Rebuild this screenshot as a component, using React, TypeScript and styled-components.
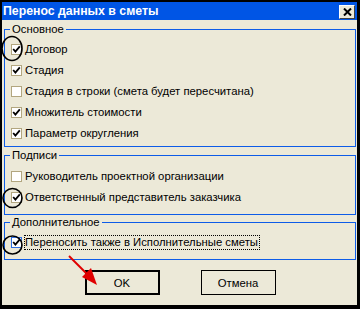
import React from 'react';
import styled, { createGlobalStyle } from 'styled-components';

const GlobalStyle = createGlobalStyle`
  html, body {
    margin: 0;
    padding: 0;
    background: #fff;
  }
`;

const Window = styled.div`
  position: relative;
  box-sizing: border-box;
  width: 360px;
  height: 309px;
  border-style: solid;
  border-color: #000;
  border-width: 2px 3px 4px 2px;
  background: #ece9d8;
  display: flex;
  flex-direction: column;
  font-family: 'Liberation Sans', Arial, sans-serif;
  font-size: 11.3px;
  color: #000;
`;

const TitleBar = styled.div`
  height: 18px;
  flex: none;
  background: #0055e5;
  display: flex;
  align-items: flex-start;
  justify-content: space-between;
  padding: 0 2px 0 1px;
`;

const Title = styled.div`
  color: #fff;
  font-weight: bold;
  font-size: 12.3px;
  line-height: 18px;
`;

const CloseButton = styled.div`
  box-sizing: border-box;
  width: 16px;
  height: 14px;
  margin-top: 3px;
  background: #ece9d8;
  border: 1px solid;
  border-color: #fff #404040 #404040 #fff;
  display: flex;
  align-items: center;
  justify-content: center;
`;

const Body = styled.div`
  padding: 9px 1px 0 2px;
`;

const Group = styled.div<{ $top: number; $bottom: number }>`
  border: 1px solid #0d5ce8;
  margin-top: ${({ $top }) => $top}px;
  padding-bottom: ${({ $bottom }) => $bottom}px;
`;

const Legend = styled.div<{ $gap: number }>`
  width: fit-content;
  margin: -8px 0 ${({ $gap }) => $gap}px 5px;
  padding: 0 2px;
  line-height: 14px;
  background: #ece9d8;
`;

const Row = styled.div`
  height: 21px;
  display: flex;
  align-items: center;
  padding-left: 6px;
  gap: 3px;
`;

const Box = styled.div<{ $focus?: boolean }>`
  box-sizing: border-box;
  width: 11px;
  height: 11px;
  flex: none;
  background: #fff;
  border: 1px solid ${({ $focus }) => ($focus ? '#2f6fe0' : '#b2a67f')};
  display: flex;
  align-items: center;
  justify-content: center;
`;

const Label = styled.span<{ $focus?: boolean }>`
  line-height: 13px;
  white-space: nowrap;
  margin-left: ${({ $focus }) => ($focus ? -1 : 0)}px;
  border: ${({ $focus }) => ($focus ? '1px dotted #000' : 'none')};
  padding: ${({ $focus }) => ($focus ? '0 1px 0 0' : '0')};
`;

const Buttons = styled.div`
  display: flex;
  justify-content: center;
  gap: 41px;
  margin-top: 10px;
`;

const Button = styled.div<{ $default?: boolean }>`
  box-sizing: border-box;
  width: 75px;
  height: 25px;
  border: ${({ $default }) => ($default ? '2px' : '1px')} solid #000;
  background: #ece9d8;
  display: flex;
  align-items: center;
  justify-content: center;
`;

const Marks = styled.svg`
  position: absolute;
  left: -2px;
  top: -2px;
  pointer-events: none;
`;

const Check = () => (
  <svg width="9" height="9" viewBox="0 0 9 9">
    <polyline points="1.2,4 3.4,6.6 7.8,1.4" fill="none" stroke="#000" strokeWidth="1.8" />
  </svg>
);

type Item = { text: string; checked: boolean; focus?: boolean };

const CheckRow = ({ text, checked, focus }: Item) => (
  <Row>
    <Box $focus={focus}>{checked && <Check />}</Box>
    <Label $focus={focus}>{text}</Label>
  </Row>
);

const groups = [
  {
    title: 'Основное',
    top: 0,
    gap: 3,
    bottom: 2,
    items: [
      { text: 'Договор', checked: true },
      { text: 'Стадия', checked: true },
      { text: 'Стадия в строки (смета будет пересчитана)', checked: false },
      { text: 'Множитель стоимости', checked: true },
      { text: 'Параметр округления', checked: true },
    ],
  },
  {
    title: 'Подписи',
    top: 8,
    gap: 4,
    bottom: 6,
    items: [
      { text: 'Руководитель проектной организации', checked: false },
      { text: 'Ответственный представитель заказчика', checked: true },
    ],
  },
  {
    title: 'Дополнительное',
    top: 7,
    gap: 3,
    bottom: 6,
    items: [{ text: 'Переносить также в Исполнительные сметы', checked: true, focus: true }],
  },
];

export default function App() {
  return (
    <>
      <GlobalStyle />
      <Window>
        <TitleBar>
          <Title>Перенос данных в сметы</Title>
          <CloseButton>
            <svg width="9" height="8" viewBox="0 0 9 8">
              <path d="M1 0.5 L8 7.5 M8 0.5 L1 7.5" stroke="#000" strokeWidth="2" />
            </svg>
          </CloseButton>
        </TitleBar>
        <Body>
          {groups.map((g) => (
            <Group key={g.title} $top={g.top} $bottom={g.bottom}>
              <Legend $gap={g.gap}>{g.title}</Legend>
              {g.items.map((it) => (
                <CheckRow key={it.text} {...it} />
              ))}
            </Group>
          ))}
          <Buttons>
            <Button $default>OK</Button>
            <Button>Отмена</Button>
          </Buttons>
        </Body>
        <Marks width="360" height="309" viewBox="0 0 360 309">
          <ellipse cx="12" cy="48.5" rx="10" ry="12" fill="none" stroke="#000" strokeWidth="1.6" />
          <ellipse cx="12.5" cy="198" rx="9.5" ry="9.5" fill="none" stroke="#000" strokeWidth="1.6" />
          <ellipse cx="12.5" cy="245" rx="9.5" ry="9" fill="none" stroke="#000" strokeWidth="1.6" />
          <line x1="69" y1="256" x2="88" y2="275" stroke="#e00000" strokeWidth="2" />
          <polygon points="97,285 82,277 91,268" fill="#e00000" />
        </Marks>
      </Window>
    </>
  );
}
